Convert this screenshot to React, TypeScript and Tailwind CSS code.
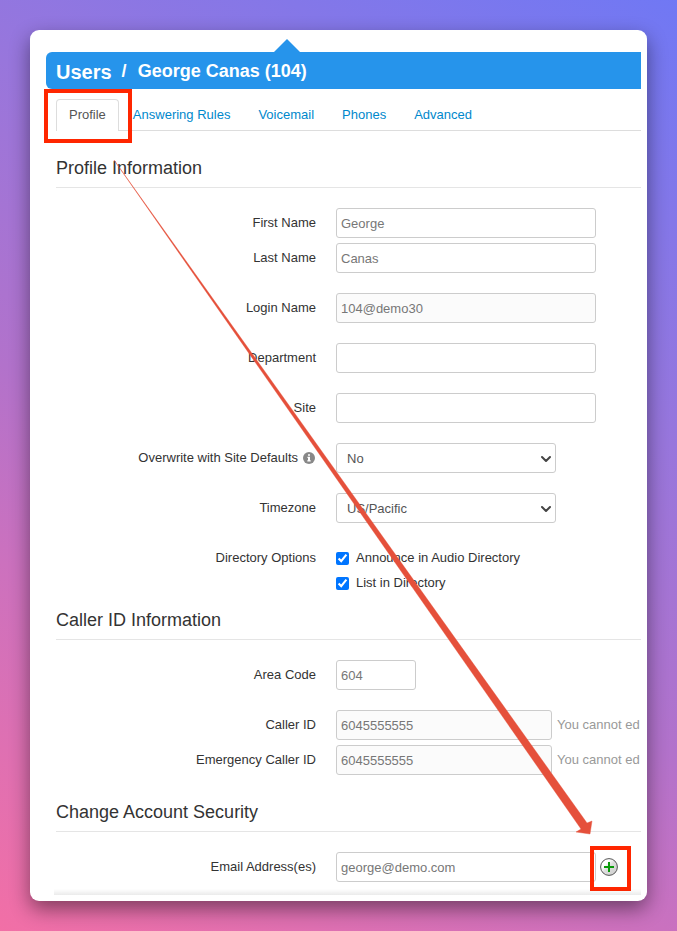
import type { ReactNode } from 'react';
import { ChevronDown } from 'lucide-react';

type RowProps = {
  label: string;
  htmlFor?: string;
  info?: boolean;
  tight?: boolean;
  children: ReactNode;
};

const inputClass = 'h-[30px] rounded-[3px] border border-[#ccc] px-1 text-[13px] text-[#777] outline-none';
const labelClass = 'mr-5 flex h-[30px] w-[260px] shrink-0 items-center justify-end whitespace-nowrap';

const tabs = ['Answering Rules', 'Voicemail', 'Phones', 'Advanced'];

const InfoIcon = () => (
  <svg viewBox="0 0 12 12" className="mr-px ml-[5px] h-3 w-3 shrink-0" aria-hidden="true">
    <circle cx="6" cy="6" r="6" fill="#888" />
    <path d="M5 2.2h2v1.6H5zM4.4 4.8H7v3.4h.7v1.2H4.3V8.2H5V6h-.6z" fill="#fff" />
  </svg>
);

const Row = ({ label, htmlFor, info, tight, children }: RowProps) => (
  <div className={`flex ${tight ? 'mt-[5px]' : 'mt-5'}`}>
    {htmlFor ? (
      <label htmlFor={htmlFor} className={labelClass}>
        {label}
        {info && <InfoIcon />}
      </label>
    ) : (
      <span className={labelClass}>{label}</span>
    )}
    {children}
  </div>
);

const Heading = ({ children }: { children: ReactNode }) => (
  <h2 className="border-b border-[#e5e5e5] text-[18px] leading-[38px]">{children}</h2>
);

const SelectBox = ({ id, options }: { id: string; options: string[] }) => (
  <div className="relative w-[220px]">
    <select id={id} className="h-[30px] w-full appearance-none rounded-[3px] border border-[#ccc] bg-white px-2.5 pt-0.5 text-[13px] text-[#555] outline-none">
      {options.map((option) => (
        <option key={option}>{option}</option>
      ))}
    </select>
    <ChevronDown className="pointer-events-none absolute top-2 right-0.5 h-4 w-4 text-[#444]" strokeWidth={3} />
  </div>
);

const Check = ({ label }: { label: string }) => (
  <label className="flex h-[25px] items-center gap-[7px]">
    <input type="checkbox" defaultChecked className="mt-0.5 h-[13px] w-[13px] accent-[#0075ff]" />
    {label}
  </label>
);

const AddIcon = () => (
  <svg viewBox="0 0 18 18" className="h-[18px] w-[18px]" aria-hidden="true">
    <defs>
      <linearGradient id="add-fill" x1="0" y1="0" x2="1" y2="1">
        <stop offset="0.3" stopColor="#fff" />
        <stop offset="0.5" stopColor="#ddd" />
        <stop offset="1" stopColor="#ccc" />
      </linearGradient>
    </defs>
    <circle cx="9" cy="9" r="8.4" fill="url(#add-fill)" stroke="#555" strokeWidth="1" />
    <path d="M9 4v10M4 9h10" stroke="#0a9a0a" strokeWidth="2" />
  </svg>
);

const ArrowOverlay = () => (
  <svg viewBox="0 0 677 931" className="pointer-events-none absolute top-0 left-0 h-[931px] w-[677px]" aria-hidden="true">
    <path d="M114 160L587 823l5-2-2 13-14-2 5-3z" fill="#e5503b" stroke="#e5503b" strokeWidth="0.4" />
  </svg>
);

const App = () => {
  return (
    <div className="relative min-h-screen bg-[linear-gradient(30deg,#f26fa6_0%,#cc71be_28%,#b272cb_43%,#9876dc_66%,#7078f4_100%)] p-[30px] font-['Liberation_Sans',Arial,sans-serif] text-[13px] text-[#333]">
      <main className="rounded-[9px] bg-white pt-[22px] pr-1.5 pb-1.5 pl-4 shadow-[0_8px_20px_rgba(0,0,0,0.45)]">
        <header className="relative flex h-[37px] items-center rounded-l-md bg-[#2694eb] pt-0.5 pl-2.5 font-bold text-white">
          <span className="absolute -top-[13px] left-[228px] h-0 w-0 border-x-[13px] border-b-[13px] border-x-transparent border-b-[#2694eb]" />
          <h1 className="flex items-center text-[18px]">
            <a href="#" className="text-[20px]">Users</a>
            <span className="mr-[11px] ml-2.5">/</span>
            George Canas (104)
          </h1>
        </header>

        <div className="relative overflow-hidden pl-2.5">
          <nav className="mt-2.5 flex border-b border-[#ddd]">
            <a href="#" className="-mb-px mr-px rounded-t border border-b-0 border-[#ddd] bg-white px-3 py-[5px] leading-5 text-[#555]">
              Profile
            </a>
            {tabs.map((tab) => (
              <a key={tab} href="#" className="mr-0.5 px-[13px] py-[5px] leading-[21px] text-[#0088cc]">
                {tab}
              </a>
            ))}
          </nav>

          <section className="mt-[18px]">
            <Heading>Profile Information</Heading>
            <Row label="First Name" htmlFor="first">
              <input id="first" defaultValue="George" className={`${inputClass} w-[260px]`} />
            </Row>
            <Row label="Last Name" htmlFor="last" tight>
              <input id="last" defaultValue="Canas" className={`${inputClass} w-[260px]`} />
            </Row>
            <Row label="Login Name" htmlFor="login">
              <input id="login" readOnly defaultValue="104@demo30" className={`${inputClass} w-[260px] bg-[#fbfbfb]`} />
            </Row>
            <Row label="Department" htmlFor="department">
              <input id="department" className={`${inputClass} w-[260px]`} />
            </Row>
            <Row label="Site" htmlFor="site">
              <input id="site" className={`${inputClass} w-[260px]`} />
            </Row>
            <Row label="Overwrite with Site Defaults" htmlFor="overwrite" info>
              <SelectBox id="overwrite" options={['No', 'Yes']} />
            </Row>
            <Row label="Timezone" htmlFor="timezone">
              <SelectBox id="timezone" options={['US/Pacific', 'US/Mountain', 'US/Central', 'US/Eastern']} />
            </Row>
            <Row label="Directory Options">
              <div className="pt-0.5">
                <Check label="Announce in Audio Directory" />
                <Check label="List in Directory" />
              </div>
            </Row>
          </section>

          <section className="mt-1.5">
            <Heading>Caller ID Information</Heading>
            <Row label="Area Code" htmlFor="area">
              <input id="area" defaultValue="604" className={`${inputClass} w-20`} />
            </Row>
            <Row label="Caller ID" htmlFor="callerid">
              <input id="callerid" readOnly defaultValue="6045555555" className={`${inputClass} w-[216px] shrink-0 bg-[#fbfbfb]`} />
              <span className="ml-[5px] leading-[30px] whitespace-nowrap text-[#999]">You cannot ed</span>
            </Row>
            <Row label="Emergency Caller ID" htmlFor="emergency" tight>
              <input id="emergency" readOnly defaultValue="6045555555" className={`${inputClass} w-[216px] shrink-0 bg-[#fbfbfb]`} />
              <span className="ml-[5px] leading-[30px] whitespace-nowrap text-[#999]">You cannot ed</span>
            </Row>
          </section>

          <section className="mt-[18px] pb-[13px]">
            <Heading>Change Account Security</Heading>
            <Row label="Email Address(es)" htmlFor="email">
              <input id="email" defaultValue="george@demo.com" className={`${inputClass} w-[260px] shrink-0`} />
              <div className="relative ml-1 flex items-center">
                <button type="button" aria-label="Add email address">
                  <AddIcon />
                </button>
                <span className="pointer-events-none absolute -top-1.5 -left-2.5 h-[45px] w-[41px] border-4 border-[#ff2600]" />
              </div>
            </Row>
          </section>
          <div className="pointer-events-none absolute right-0 bottom-0 left-2 h-1.5 bg-linear-to-b from-transparent to-black/8" />
        </div>
      </main>

      <span className="pointer-events-none absolute top-[89px] left-11 h-[54px] w-[88px] border-4 border-[#ff2600]" />
      <ArrowOverlay />
    </div>
  );
};

export default App;
